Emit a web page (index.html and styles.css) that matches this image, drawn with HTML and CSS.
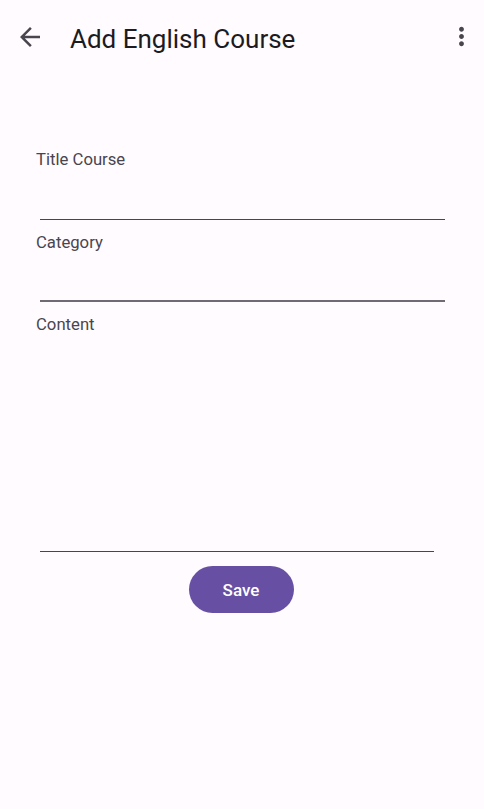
FILE: index.html
```html
<!DOCTYPE html>
<html lang="en">
<head>
<meta charset="utf-8">
<title>Add English Course</title>
<link rel="stylesheet" href="styles.css">
</head>
<body>
<div class="screen">
  <header class="topbar">
    <button class="icon-btn back" aria-label="Back">
      <svg viewBox="0 0 24 24" width="30" height="30"><path d="M20 11H7.83l5.59-5.59L12 4l-8 8 8 8 1.41-1.41L7.83 13H20v-2z" fill="#49454F"/></svg>
    </button>
    <h1 class="title">Add English Course</h1>
    <button class="icon-btn more" aria-label="More">
      <svg viewBox="0 0 24 24" width="29" height="29"><path d="M12 8c1.1 0 2-.9 2-2s-.9-2-2-2-2 .9-2 2 .9 2 2 2zm0 2c-1.1 0-2 .9-2 2s.9 2 2 2 2-.9 2-2-.9-2-2-2zm0 6c-1.1 0-2 .9-2 2s.9 2 2 2 2-.9 2-2-.9-2-2-2z" fill="#49454F"/></svg>
    </button>
  </header>
  <main class="form">
    <div class="field">
      <label class="label">Title Course</label>
      <div class="input input-short"></div>
    </div>
    <div class="field">
      <label class="label">Category</label>
      <div class="input input-short input-light"></div>
    </div>
    <div class="field">
      <label class="label">Content</label>
      <div class="input input-tall"></div>
    </div>
    <div class="actions">
      <button class="save">Save</button>
    </div>
  </main>
</div>
</body>
</html>
```
FILE: styles.css
```css
html, body {
  margin: 0;
  padding: 0;
  background: #FFFBFE;
}
body {
  font-family: Roboto, "Noto Sans", sans-serif;
  color: #1C1B1F;
}
.screen {
  width: 484px;
  height: 809px;
  background: #FFFBFE;
}
.topbar {
  display: flex;
  align-items: center;
  height: 76px;
  padding: 0 8px 0 15px;
  box-sizing: border-box;
}
.icon-btn {
  border: 0;
  background: none;
  padding: 0;
  display: flex;
  align-items: center;
  justify-content: center;
  margin-bottom: 3px;
}
.icon-btn svg { display: block; }
.title {
  margin: 0 0 0 25px;
  font-size: 26px;
  font-weight: 400;
  line-height: 32px;
  color: #1C1B1F;
  flex: 1;
  padding-top: 1px;
}
.form {
  padding: 74px 0 0 36px;
  display: flex;
  flex-direction: column;
}
.field {
  display: flex;
  flex-direction: column;
  margin-bottom: 13px;
}
.label {
  font-size: 16.7px;
  line-height: 20px;
  color: #49454F;
}
.input {
  margin-left: 4px;
  border-bottom: 1px solid #49454F;
}
.input-short {
  width: 405px;
  height: 49px;
}
.input-light {
  border-bottom: 2px solid #6f6b75;
  height: 47px;
}
.input-tall {
  width: 394px;
  height: 216px;
}
.actions {
  display: flex;
  justify-content: center;
  padding-right: 38px;
  margin-top: 1px;
}
.save {
  width: 105px;
  height: 47px;
  border: 0;
  border-radius: 24px;
  background: #6750A4;
  color: #FFFFFF;
  font-family: Roboto, "Noto Sans", sans-serif;
  font-size: 17px;
  font-weight: 500;
}
```
